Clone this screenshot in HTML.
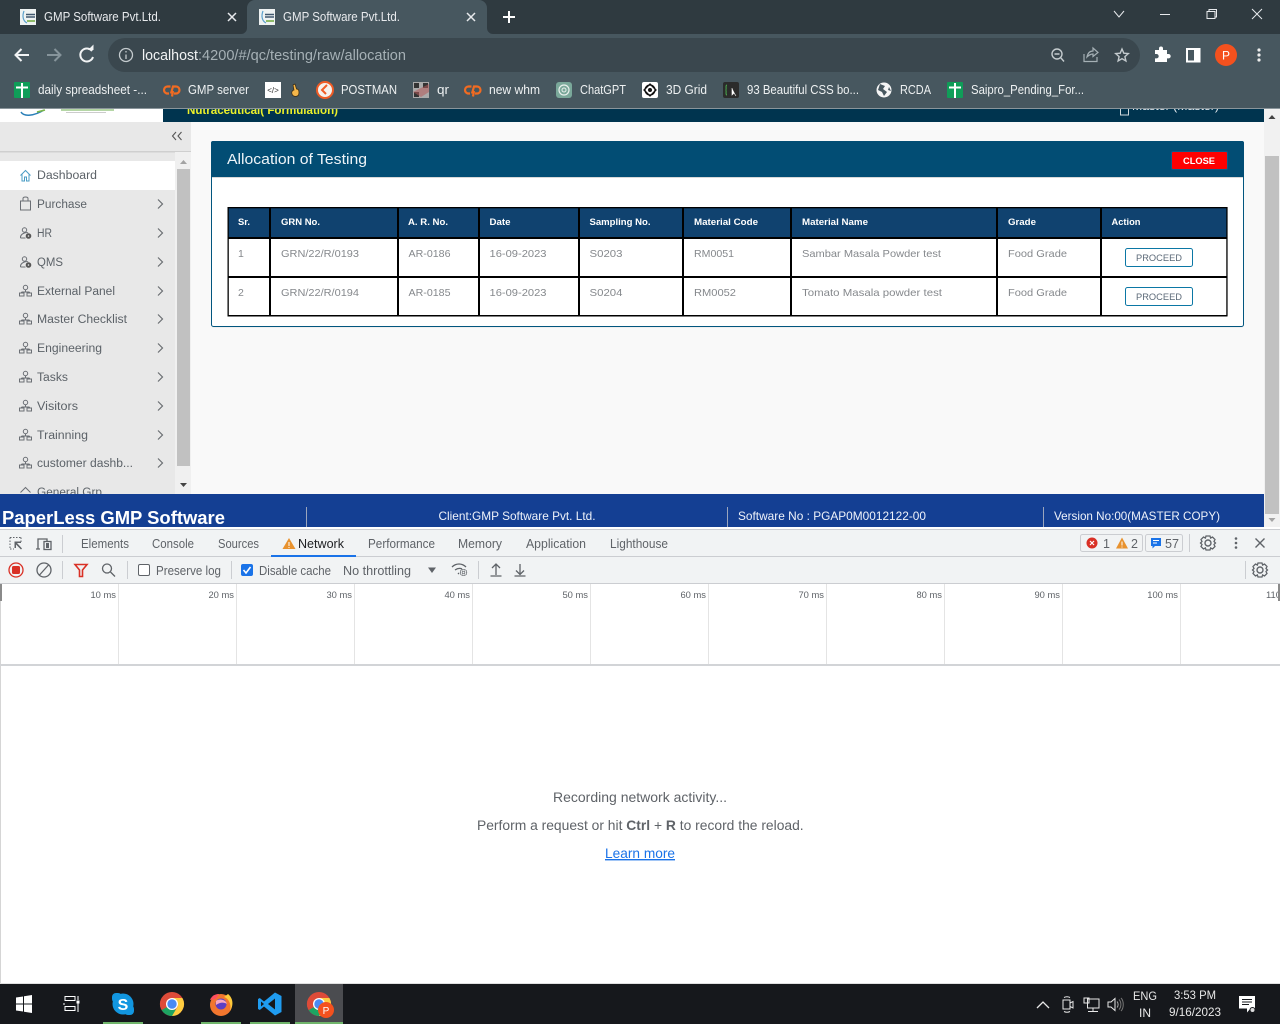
<!DOCTYPE html>
<html lang="en"><head><meta charset="utf-8"><title>GMP Software Pvt.Ltd.</title>
<style>
html,body{margin:0;padding:0;width:1280px;height:1024px;overflow:hidden;background:#fff}
svg{display:block}
text{font-family:"Liberation Sans",sans-serif;white-space:pre}
.chrome{font-size:13px;fill:#e8eaed}
.bm{font-size:12.5px;fill:#eef1f2}
.nav{font-size:11.5px;fill:#5c6268}
.th{font-size:9.5px;font-weight:700;fill:#fff}
.td{font-size:10.5px;fill:#85888c}
.foot{font-size:12px;fill:#eef2fa}
.dt{font-size:12.5px;fill:#5f6368}
.ms{font-size:9.4px;fill:#5f6368;text-anchor:end}
.mid{font-size:13.85px;fill:#5f6368}
.tray{font-size:12px;fill:#e8e8e8}
.st{fill:none;stroke:#6b6f75;stroke-width:1}
.ic{fill:none;stroke:#5f6368;stroke-width:1.3}
</style></head><body>
<svg width="1280" height="1024" viewBox="0 0 1280 1024" xmlns="http://www.w3.org/2000/svg">
<defs>
<g id="org"><circle cx="0" cy="-3.5" r="2.2" class="st"/><path d="M0-1.5V1M-4 1H4M-4 1V2M4 1V2" class="st"/><rect x="-6" y="2" width="4.5" height="3" class="st"/><rect x="1.5" y="2" width="4.5" height="3" class="st"/></g>
<g id="usr"><circle cx="-1" cy="-3" r="2.2" class="st"/><path d="M-5 5C-5.5 0 2-1 2.500 0" class="st"/><path d="M-5 5H0" class="st"/><circle cx="3" cy="3" r="2.300" fill="#555" stroke="#555"/><circle cx="3" cy="3" r=".8" fill="#e8e8e8"/></g>
<path id="chev" d="M-2-4.500L2.500 0L-2 4.500" fill="none" stroke="#6a6e72" stroke-width="1.200"/>
<g id="cp" fill="none" stroke="#f26b21" stroke-width="2.200"><path d="M-1.500-3.500H-4.500A3.500 3.500 0 0 0-4.500 3.500H-3"/><path d="M-1 3.500L1-3.500H4A3.500 3.500 0 0 1 4 3.500H2M1 1L0 6.500"/></g>
<g id="sheet"><rect x="-8" y="-8" width="16" height="16" rx="1" fill="#0f9d58"/><path d="M-6-2.500H6M0-7V8" stroke="#fff" stroke-width="2"/></g>
<g id="fav"><rect x="-8" y="-8" width="16" height="16" fill="#eef2f2"/><path d="M-4-6C-6-1-5 4-1 6" fill="none" stroke="#5aa0cc" stroke-width="1.200"/><path d="M-2-2.500H7M-2 0H7" stroke="#41586f" stroke-width="1.500"/><rect x="-1" y="3" width="8" height="2" fill="#8fbb6a"/></g>
<g id="chromeic"><circle r="12" fill="#dd4b39"/><path d="M0 0L-10.400 6A12 12 0 0 0 6 10.400Z" fill="#1da462"/><path d="M0-6H10.400A12 12 0 0 1 0 12L6 2Z" fill="#ffcd40"/><path d="M0 0L-10.400-6A12 12 0 0 0-10.400 6L-5 3Z" fill="#dd4b39"/><circle r="6" fill="#fff"/><circle r="4.700" fill="#4a8af4"/></g>
<g id="gear"><circle r="3" fill="none" stroke="#5f6368" stroke-width="1.400"/><path d="M-2-7H2L2.600-5 4.500-6 7-3.500 6-1.500 7.500 0 6 1.500 7 3.500 4.500 6 2.600 5 2 7H-2L-2.600 5-4.500 6-7 3.500-6 1.500-7.500 0-6-1.500-7-3.500-4.500-6-2.600-5Z" fill="none" stroke="#5f6368" stroke-width="1.300"/></g>
</defs>

<!-- page -->
<rect x="0" y="109" width="1264" height="385" fill="#f9f9f9"/>
<rect x="0" y="109" width="163" height="13" fill="#fff"/>
<path d="M21 112C24 117 34 116 44 110" fill="none" stroke="#2a7fb8" stroke-width="1.500"/><path d="M37 112L45 110" stroke="#7ab648" stroke-width="1.500"/>
<rect x="61" y="109" width="53" height="2" fill="#b5d6a6"/><rect x="66" y="112" width="40" height="1" fill="#ccc"/>
<rect x="163" y="109" width="1101" height="13" fill="#00344f"/>
<text x="187" y="114" font-size="11.500" font-weight="700" fill="#ecf02a" textLength="151" lengthAdjust="spacingAndGlyphs">Nutraceutical( Formulation)</text>
<text x="1132" y="110" font-size="11" fill="#e8eef2" textLength="87" lengthAdjust="spacingAndGlyphs">Master (Master)</text>
<rect x="1120.500" y="108" width="8" height="7" fill="none" stroke="#cfd8dc"/>

<!-- sidebar -->
<rect x="0" y="122" width="191" height="372" fill="#e8e8e8"/>
<rect x="0" y="151" width="191" height="1.500" fill="#cfcfcf"/>
<path d="M176 132L172.500 136L176 140M181.500 132L178 136L181.500 140" fill="none" stroke="#555" stroke-width="1.100"/>
<rect x="175" y="152" width="16" height="342" fill="#f0f0f0"/>
<rect x="177" y="169" width="13" height="297" fill="#c1c1c1"/>
<path d="M180 164L183.500 160L187 164Z" fill="#a3a3a3"/><path d="M180 483L183.500 487L187 483Z" fill="#444"/>
<rect x="0" y="161" width="175" height="29" fill="#fff"/>
<path d="M20.500 175.500L25.500 170.500L30.500 175.500M22 174.500V181H24.500V177H26.500V181H29V174.500" fill="none" stroke="#4a9cc4" stroke-width="1"/>
<text class="nav" x="37" y="179" textLength="60" lengthAdjust="spacingAndGlyphs">Dashboard</text>
<path d="M20.500 201H30.500V210H20.500ZM23 201V198.500C23 196.500 28 196.500 28 198.500V201" class="st"/>
<text class="nav" x="37" y="208" textLength="50" lengthAdjust="spacingAndGlyphs">Purchase</text><use href="#chev" x="160" y="204"/>
<use href="#usr" x="25.500" y="233"/><text class="nav" x="37" y="237" textLength="15" lengthAdjust="spacingAndGlyphs">HR</text><use href="#chev" x="160" y="233"/>
<use href="#usr" x="25.500" y="262"/><text class="nav" x="37" y="266" textLength="26" lengthAdjust="spacingAndGlyphs">QMS</text><use href="#chev" x="160" y="262"/>
<use href="#org" x="25.500" y="291"/><text class="nav" x="37" y="295" textLength="78" lengthAdjust="spacingAndGlyphs">External Panel</text><use href="#chev" x="160" y="291"/>
<use href="#org" x="25.500" y="319"/><text class="nav" x="37" y="323" textLength="90" lengthAdjust="spacingAndGlyphs">Master Checklist</text><use href="#chev" x="160" y="319"/>
<use href="#org" x="25.500" y="348"/><text class="nav" x="37" y="352" textLength="65" lengthAdjust="spacingAndGlyphs">Engineering</text><use href="#chev" x="160" y="348"/>
<use href="#org" x="25.500" y="377"/><text class="nav" x="37" y="381" textLength="31" lengthAdjust="spacingAndGlyphs">Tasks</text><use href="#chev" x="160" y="377"/>
<use href="#org" x="25.500" y="406"/><text class="nav" x="37" y="410" textLength="41" lengthAdjust="spacingAndGlyphs">Visitors</text><use href="#chev" x="160" y="406"/>
<use href="#org" x="25.500" y="435"/><text class="nav" x="37" y="439" textLength="51" lengthAdjust="spacingAndGlyphs">Trainning</text><use href="#chev" x="160" y="435"/>
<use href="#org" x="25.500" y="463"/><text class="nav" x="37" y="467" textLength="96" lengthAdjust="spacingAndGlyphs">customer dashb...</text><use href="#chev" x="160" y="463"/>
<path d="M20.500 492.500L25.500 487.500L30.500 492.500" class="st"/><text class="nav" x="37" y="496" textLength="65" lengthAdjust="spacingAndGlyphs">General Grp</text>

<!-- card -->
<rect x="211.500" y="143.500" width="1032" height="184" rx="2" fill="#000" opacity=".08"/>
<rect x="211.500" y="141.500" width="1032" height="185" rx="2" fill="#fff" stroke="#02567f"/>
<path d="M211 143a2 2 0 0 1 2-2H1242a2 2 0 0 1 2 2V177H211Z" fill="#024d74"/>
<rect x="212" y="177" width="1031" height="1" fill="#d8d8d8"/>
<text x="227" y="164" font-size="15" fill="#eef4f8" textLength="140" lengthAdjust="spacingAndGlyphs">Allocation of Testing</text>
<rect x="1171.500" y="151.500" width="56" height="18" rx="1.500" fill="#fe0000" stroke="#0d5a86"/>
<text x="1183" y="164" font-size="9.500" font-weight="700" fill="#fff" textLength="32" lengthAdjust="spacingAndGlyphs">CLOSE</text>

<!-- table -->
<rect x="228" y="208" width="999" height="30" fill="#10426f"/>
<g fill="#000">
<rect x="227.500" y="207" width="1000" height="1.300"/><rect x="227.500" y="237" width="1000" height="2"/><rect x="227.500" y="276" width="1000" height="2"/><rect x="227.500" y="315" width="1000" height="1.500"/>
<rect x="227.500" y="207" width="1.300" height="109"/><rect x="269" y="207" width="2" height="109"/><rect x="397" y="207" width="2" height="109"/><rect x="478" y="207" width="2" height="109"/><rect x="578" y="207" width="2" height="109"/><rect x="682" y="207" width="2" height="109"/><rect x="790" y="207" width="2" height="109"/><rect x="996" y="207" width="2" height="109"/><rect x="1100" y="207" width="2" height="109"/><rect x="1226.300" y="207" width="1.300" height="109"/>
</g>
<text class="th" x="238" y="225" textLength="12" lengthAdjust="spacingAndGlyphs">Sr.</text>
<text class="th" x="281" y="225" textLength="39" lengthAdjust="spacingAndGlyphs">GRN No.</text>
<text class="th" x="408" y="225" textLength="40" lengthAdjust="spacingAndGlyphs">A. R. No.</text>
<text class="th" x="489.500" y="225" textLength="21" lengthAdjust="spacingAndGlyphs">Date</text>
<text class="th" x="589.500" y="225" textLength="61" lengthAdjust="spacingAndGlyphs">Sampling No.</text>
<text class="th" x="694" y="225" textLength="64" lengthAdjust="spacingAndGlyphs">Material Code</text>
<text class="th" x="802" y="225" textLength="66" lengthAdjust="spacingAndGlyphs">Material Name</text>
<text class="th" x="1008" y="225" textLength="28" lengthAdjust="spacingAndGlyphs">Grade</text>
<text class="th" x="1111.500" y="225" textLength="29" lengthAdjust="spacingAndGlyphs">Action</text>

<text class="td" x="238" y="257">1</text>
<text class="td" x="281" y="257" textLength="78" lengthAdjust="spacingAndGlyphs">GRN/22/R/0193</text>
<text class="td" x="408.500" y="257" textLength="42" lengthAdjust="spacingAndGlyphs">AR-0186</text>
<text class="td" x="489.500" y="257" textLength="57" lengthAdjust="spacingAndGlyphs">16-09-2023</text>
<text class="td" x="589.500" y="257" textLength="33" lengthAdjust="spacingAndGlyphs">S0203</text>
<text class="td" x="694" y="257" textLength="40" lengthAdjust="spacingAndGlyphs">RM0051</text>
<text class="td" x="802" y="257" textLength="139" lengthAdjust="spacingAndGlyphs">Sambar Masala Powder test</text>
<text class="td" x="1008" y="257" textLength="59" lengthAdjust="spacingAndGlyphs">Food Grade</text>
<rect x="1125.500" y="248.500" width="67" height="18" rx="2" fill="#fff" stroke="#0b77a5"/>
<text x="1136" y="261" font-size="9" fill="#5c6a78" textLength="46" lengthAdjust="spacingAndGlyphs">PROCEED</text>

<text class="td" x="238" y="296">2</text>
<text class="td" x="281" y="296" textLength="78" lengthAdjust="spacingAndGlyphs">GRN/22/R/0194</text>
<text class="td" x="408.500" y="296" textLength="42" lengthAdjust="spacingAndGlyphs">AR-0185</text>
<text class="td" x="489.500" y="296" textLength="57" lengthAdjust="spacingAndGlyphs">16-09-2023</text>
<text class="td" x="589.500" y="296" textLength="33" lengthAdjust="spacingAndGlyphs">S0204</text>
<text class="td" x="694" y="296" textLength="42" lengthAdjust="spacingAndGlyphs">RM0052</text>
<text class="td" x="802" y="296" textLength="140" lengthAdjust="spacingAndGlyphs">Tomato Masala powder test</text>
<text class="td" x="1008" y="296" textLength="59" lengthAdjust="spacingAndGlyphs">Food Grade</text>
<rect x="1125.500" y="287.500" width="67" height="18" rx="2" fill="#fff" stroke="#0b77a5"/>
<text x="1136" y="300" font-size="9" fill="#5c6a78" textLength="46" lengthAdjust="spacingAndGlyphs">PROCEED</text>

<!-- footer -->
<rect x="0" y="494" width="1264" height="33" fill="#143f93"/>
<text x="2" y="524" font-size="18.500" font-weight="700" fill="#fff" textLength="223" lengthAdjust="spacingAndGlyphs">PaperLess GMP Software</text>
<rect x="306" y="507" width="1" height="20" fill="#9aa5bd"/><rect x="727" y="507" width="1" height="20" fill="#9aa5bd"/><rect x="1043" y="507" width="1" height="20" fill="#9aa5bd"/>
<text class="foot" x="438.500" y="520" textLength="157" lengthAdjust="spacingAndGlyphs">Client:GMP Software Pvt. Ltd.</text>
<text class="foot" x="738" y="520" textLength="188" lengthAdjust="spacingAndGlyphs">Software No : PGAP0M0012122-00</text>
<text class="foot" x="1054" y="520" textLength="166" lengthAdjust="spacingAndGlyphs">Version No:00(MASTER COPY)</text>

<!-- page scrollbar -->
<rect x="1264" y="109" width="16" height="418" fill="#f1f1f1"/>
<rect x="1265" y="156" width="14" height="358" fill="#c1c1c1"/>
<path d="M1268.500 119L1272 115L1275.500 119Z" fill="#444"/><path d="M1268.500 518L1272 522L1275.500 518Z" fill="#a3a3a3"/>

<!-- browser chrome -->
<rect x="0" y="0" width="1280" height="34" fill="#2f3a40"/>
<rect x="0" y="34" width="1280" height="74" fill="#47575f"/>
<rect x="0" y="108" width="1280" height="1" fill="#8a959b"/>
<path d="M241 34a6 6 0 0 0 6-6V8a8 8 0 0 1 8-8H479a8 8 0 0 1 8 8V28a6 6 0 0 0 6 6Z" fill="#47575f"/>
<use href="#fav" x="28" y="17"/><use href="#fav" x="267" y="17"/>
<text class="chrome" x="44" y="21" textLength="117" lengthAdjust="spacingAndGlyphs">GMP Software Pvt.Ltd.</text>
<text class="chrome" x="283" y="21" textLength="117" lengthAdjust="spacingAndGlyphs">GMP Software Pvt.Ltd.</text>
<path d="M228 13L236 21M236 13L228 21M467 13L475 21M475 13L467 21" stroke="#e8eaed" stroke-width="1.500"/>
<path d="M509 11V23M503 17H515" stroke="#fff" stroke-width="2"/>
<path d="M1114 11L1119 17L1124 11" fill="none" stroke="#e8eaed"/>
<path d="M1160 14.500H1170" stroke="#e8eaed"/>
<path d="M1207 11.500H1215V18.500H1207ZM1209 11V9.500H1216.500V17H1215" fill="none" stroke="#e8eaed"/>
<path d="M1252 9L1262 19M1262 9L1252 19" stroke="#e8eaed" stroke-width="1"/>

<path d="M16 55H29M21.500 49L15.500 55L21.500 61" fill="none" stroke="#f1f3f4" stroke-width="2"/>
<path d="M47 55H60M54.500 49L60.500 55L54.500 61" fill="none" stroke="#86949b" stroke-width="2"/>
<path d="M92 51A6.500 6.500 0 1 0 93 57" fill="none" stroke="#f1f3f4" stroke-width="2"/><path d="M88 50H93.500V44.500Z" fill="#f1f3f4"/>
<rect x="108" y="38" width="1032" height="34" rx="17" fill="#3a474e"/>
<circle cx="126" cy="55" r="6.500" fill="none" stroke="#c4cbce" stroke-width="1.300"/><path d="M126 54.500V59M126 51V52.500" stroke="#c4cbce" stroke-width="1.300"/>
<text x="142" y="60" font-size="14.500" fill="#f1f3f4" textLength="56" lengthAdjust="spacingAndGlyphs">localhost</text>
<text x="198" y="60" font-size="14.500" fill="#a5b0b5" textLength="208" lengthAdjust="spacingAndGlyphs">:4200/#/qc/testing/raw/allocation</text>
<circle cx="1057" cy="54" r="5" fill="none" stroke="#c4cbce" stroke-width="1.400"/><path d="M1054.500 54H1059.500M1061 58L1064 61.500" stroke="#c4cbce" stroke-width="1.400"/>
<path d="M1084 54V61.500H1097V57M1087 57C1088 52 1091 51 1093 51V48L1098 52.500L1093 56.500V54C1091 54 1089 55 1087 57Z" fill="none" stroke="#a5b0b5" stroke-width="1.200"/>
<path d="M1122 49L1123.800 53.200L1128.300 53.600L1124.900 56.600L1125.900 61L1122 58.700L1118.100 61L1119.100 56.600L1115.700 53.600L1120.200 53.200Z" fill="none" stroke="#c4cbce" stroke-width="1.400"/>
<path d="M1155 50H1159V48.500A2 2 0 0 1 1163 48.500V50H1167V54H1168.500A2.200 2.200 0 0 1 1168.500 58.400H1167V62H1155V58.400H1156.500A2.200 2.200 0 0 0 1156.500 54H1155Z" fill="#fff"/>
<rect x="1187" y="49" width="12.500" height="12.500" fill="none" stroke="#fff" stroke-width="2"/><rect x="1194" y="49" width="6" height="13" fill="#fff"/>
<circle cx="1226" cy="55" r="11" fill="#f4511e"/><text x="1226" y="59.500" font-size="12" fill="#fff" text-anchor="middle">P</text>
<circle cx="1259" cy="50" r="1.600" fill="#eee"/><circle cx="1259" cy="55" r="1.600" fill="#eee"/><circle cx="1259" cy="60" r="1.600" fill="#eee"/>

<!-- bookmarks -->
<use href="#sheet" x="22" y="90"/><text class="bm" x="38" y="94" textLength="109" lengthAdjust="spacingAndGlyphs">daily spreadsheet -...</text>
<use href="#cp" x="172" y="90"/><text class="bm" x="188" y="94" textLength="61" lengthAdjust="spacingAndGlyphs">GMP server</text>
<rect x="265" y="82" width="16" height="16" fill="#fff"/><text x="273" y="93" font-size="8" fill="#333" text-anchor="middle">&lt;/&gt;</text>
<path d="M293 85L295 84L296.500 89C299 89 299.500 92 298.500 95C297 97 293 97 292 94C291 91 293.500 90 294 90Z" fill="#f5b74a" stroke="#3a2a10" stroke-width=".7"/>
<circle cx="325" cy="90" r="8" fill="#f5f0ec" stroke="#ef5b25" stroke-width="2"/><path d="M327 85L322 90L326 94" fill="none" stroke="#ef5b25" stroke-width="2"/><text class="bm" x="341" y="94" textLength="56" lengthAdjust="spacingAndGlyphs">POSTMAN</text>
<rect x="413" y="82" width="16" height="16" fill="#aaa"/><rect x="414" y="83" width="5" height="5" fill="#333"/><rect x="423" y="83" width="5" height="5" fill="#333"/><rect x="414" y="92" width="5" height="5" fill="#333"/><path d="M413 92L429 84V92L421 97Z" fill="#b35a5a" opacity=".55"/>
<text class="bm" x="437" y="94" textLength="12" lengthAdjust="spacingAndGlyphs">qr</text>
<use href="#cp" x="473" y="90"/><text class="bm" x="489" y="94" textLength="51" lengthAdjust="spacingAndGlyphs">new whm</text>
<rect x="556" y="82" width="16" height="16" rx="3" fill="#7aa89a"/><circle cx="564" cy="90" r="5" fill="none" stroke="#e8f0ec" stroke-width="1.200"/><circle cx="564" cy="90" r="2" fill="none" stroke="#e8f0ec"/>
<text class="bm" x="580" y="94" textLength="46" lengthAdjust="spacingAndGlyphs">ChatGPT</text>
<rect x="642" y="82" width="16" height="16" rx="2" fill="#fff"/><path d="M650 84L656 90L650 96L644 90Z" fill="none" stroke="#111" stroke-width="1.300"/><circle cx="650" cy="90" r="5" fill="none" stroke="#111" stroke-width="1.200"/><circle cx="650" cy="90" r="2" fill="#111"/>
<text class="bm" x="666" y="94" textLength="41" lengthAdjust="spacingAndGlyphs">3D Grid</text>
<rect x="723" y="82" width="16" height="16" rx="2" fill="#2b2b2b"/><path d="M727 85C725 85 727 90 725.500 90C727 90 725 95 727 95" fill="none" stroke="#4caf50"/><path d="M732 88V95L734 93L736 96" fill="#fff" stroke="#fff" stroke-width=".6"/>
<text class="bm" x="747" y="94" textLength="112" lengthAdjust="spacingAndGlyphs">93 Beautiful CSS bo...</text>
<circle cx="884" cy="90" r="7.500" fill="#f5f5f5"/><path d="M880 84L885 86L883 89L887 92L884 96L882 92L878 90ZM889 87L891 91L888 90Z" fill="#47575f"/>
<text class="bm" x="900" y="94" textLength="31" lengthAdjust="spacingAndGlyphs">RCDA</text>
<use href="#sheet" x="955" y="90"/><text class="bm" x="971" y="94" textLength="113" lengthAdjust="spacingAndGlyphs">Saipro_Pending_For...</text>

<!-- devtools -->
<rect x="0" y="527" width="1280" height="2" fill="#fff"/>
<rect x="0" y="529" width="1280" height="1" fill="#cbcdd1"/>
<rect x="0" y="530" width="1280" height="53" fill="#f1f3f4"/>
<rect x="0" y="556" width="1280" height="1" fill="#cbcdd1"/>
<rect x="0" y="583" width="1280" height="1.500" fill="#cbcdd1"/>
<rect x="0" y="584" width="1280" height="400" fill="#fff"/>
<rect x="0" y="584" width="1" height="400" fill="#d5d5d5"/>

<path d="M10 537.500H21M10 537.500V549M10 549H14M21 537.500V542" fill="none" stroke="#5f6368" stroke-dasharray="1.500 1.500"/><path d="M14.500 541.500H21V543H17L22 548.500L21 549.500L16 544.500V548H14.500Z" fill="#5f6368"/>
<path d="M36 549H40M38 549V539H47V541" class="ic" fill="none"/><rect x="44" y="541.500" width="7" height="8" class="ic"/><rect x="46" y="543" width="3" height="5" fill="#5f6368"/>
<rect x="62" y="535" width="1" height="18" fill="#cbcdd1"/>
<text class="dt" x="81" y="548" textLength="48" lengthAdjust="spacingAndGlyphs">Elements</text>
<text class="dt" x="152" y="548" textLength="42" lengthAdjust="spacingAndGlyphs">Console</text>
<text class="dt" x="218" y="548" textLength="41" lengthAdjust="spacingAndGlyphs">Sources</text>
<path d="M289 538L295.500 549H282.500Z" fill="#e8922e"/><path d="M289 542V546M289 547V548" stroke="#fff"/>
<text x="298" y="548" font-size="12.500" fill="#202124" textLength="46" lengthAdjust="spacingAndGlyphs">Network</text>
<rect x="271" y="555" width="85" height="2" fill="#1a73e8"/>
<text class="dt" x="368" y="548" textLength="67" lengthAdjust="spacingAndGlyphs">Performance</text>
<text class="dt" x="458" y="548" textLength="44" lengthAdjust="spacingAndGlyphs">Memory</text>
<text class="dt" x="526" y="548" textLength="60" lengthAdjust="spacingAndGlyphs">Application</text>
<text class="dt" x="610" y="548" textLength="58" lengthAdjust="spacingAndGlyphs">Lighthouse</text>

<rect x="1080.500" y="534.500" width="62" height="17" rx="2" fill="#f1f3f4" stroke="#cbcdd1"/>
<circle cx="1092" cy="543" r="5.500" fill="#d93025"/><path d="M1090 541L1094 545M1094 541L1090 545" stroke="#fff" stroke-width="1.200"/>
<text class="dt" x="1103" y="548">1</text>
<path d="M1122 537.500L1128 548.500H1116Z" fill="#e8922e"/><path d="M1122 541.500V545.500M1122 546.500V547.500" stroke="#fff"/>
<text class="dt" x="1131" y="548">2</text>
<rect x="1145.500" y="534.500" width="37" height="17" rx="2" fill="#f1f3f4" stroke="#cbcdd1"/>
<path d="M1151 538H1161V546H1155L1152.500 548.500V546H1151Z" fill="#1a73e8"/><path d="M1153 540.500H1159M1153 543H1157" stroke="#fff"/>
<text class="dt" x="1165" y="548" textLength="14" lengthAdjust="spacingAndGlyphs">57</text>
<rect x="1189" y="534" width="1" height="18" fill="#cbcdd1"/>
<use href="#gear" x="1208" y="543"/>
<circle cx="1236" cy="538.500" r="1.300" fill="#5f6368"/><circle cx="1236" cy="543" r="1.300" fill="#5f6368"/><circle cx="1236" cy="547.500" r="1.300" fill="#5f6368"/>
<path d="M1255.500 538.500L1264.500 547.500M1264.500 538.500L1255.500 547.500" stroke="#5f6368" stroke-width="1.400"/>

<circle cx="16" cy="570" r="7" fill="none" stroke="#d93025" stroke-width="1.300"/><rect x="12" y="566" width="8" height="8" rx="1.500" fill="#d93025"/>
<circle cx="44" cy="570" r="7" class="ic"/><path d="M39.500 575L48.500 565" class="ic"/>
<rect x="62" y="561" width="1" height="18" fill="#cbcdd1"/>
<path d="M75 564.500H87L82.500 570V576.500H79.500V570Z" fill="none" stroke="#d93025" stroke-width="1.600"/>
<circle cx="107" cy="568.500" r="4.500" class="ic" stroke-width="1.500"/><path d="M110.500 572L115 576.500" class="ic" stroke-width="1.800"/>
<rect x="127" y="561" width="1" height="18" fill="#cbcdd1"/>
<rect x="138.500" y="564.500" width="11" height="11" rx="1.500" fill="#fff" stroke="#5f6368"/>
<text class="dt" x="156" y="575" textLength="65" lengthAdjust="spacingAndGlyphs">Preserve log</text>
<rect x="231" y="561" width="1" height="18" fill="#cbcdd1"/>
<rect x="241" y="564" width="12" height="12" rx="2" fill="#1a73e8"/><path d="M243.500 570L246 573L250.500 567" fill="none" stroke="#fff" stroke-width="1.600"/>
<text class="dt" x="259" y="575" textLength="72" lengthAdjust="spacingAndGlyphs">Disable cache</text>
<text class="dt" x="343" y="575" textLength="68" lengthAdjust="spacingAndGlyphs">No throttling</text>
<path d="M428 567.500H436L432 573Z" fill="#5f6368"/>
<path d="M452 567C456 563 462 563 466 567M455 570C458 568 460 568 462 569M458 573L459 574" class="ic"/>
<use href="#gear" transform="translate(463.500 572.500) scale(.45)"/>
<rect x="478" y="561" width="1" height="18" fill="#cbcdd1"/>
<path d="M496 575V564M492 568L496 564L500 568M490.500 576H501.500" class="ic"/>
<path d="M520 564V574M516 570.500L520 574.500L524 570.500M514.500 576H525.500" class="ic"/>
<rect x="1245" y="561" width="1" height="18" fill="#cbcdd1"/>
<use href="#gear" x="1260" y="570"/>

<rect x="0" y="584" width="2" height="17" fill="#8a8a8a"/>
<g fill="#e4e4e4"><rect x="118" y="584" width="1" height="81"/><rect x="236" y="584" width="1" height="81"/><rect x="354" y="584" width="1" height="81"/><rect x="472" y="584" width="1" height="81"/><rect x="590" y="584" width="1" height="81"/><rect x="708" y="584" width="1" height="81"/><rect x="826" y="584" width="1" height="81"/><rect x="944" y="584" width="1" height="81"/><rect x="1062" y="584" width="1" height="81"/><rect x="1180" y="584" width="1" height="81"/></g>
<text class="ms" x="116" y="598">10 ms</text><text class="ms" x="234" y="598">20 ms</text><text class="ms" x="352" y="598">30 ms</text><text class="ms" x="470" y="598">40 ms</text><text class="ms" x="588" y="598">50 ms</text><text class="ms" x="706" y="598">60 ms</text><text class="ms" x="824" y="598">70 ms</text><text class="ms" x="942" y="598">80 ms</text><text class="ms" x="1060" y="598">90 ms</text><text class="ms" x="1178" y="598">100 ms</text>
<text x="1266" y="598" font-size="9.400" fill="#5f6368">110 ms</text>
<rect x="1278" y="584" width="2" height="17" fill="#8a8a8a"/>
<rect x="0" y="664" width="1280" height="2" fill="#d2d4d7"/>

<text class="mid" x="553" y="802" textLength="174" lengthAdjust="spacingAndGlyphs">Recording network activity...</text>
<text class="mid" x="477" y="830">Perform a request or hit <tspan font-weight="700">Ctrl</tspan> + <tspan font-weight="700">R</tspan> to record the reload.</text>
<text x="605" y="858" font-size="14" fill="#1a73e8" text-decoration="underline" textLength="70" lengthAdjust="spacingAndGlyphs">Learn more</text>

<!-- taskbar -->
<rect x="0" y="983" width="1280" height="1" fill="#e0e0e0"/>
<rect x="0" y="984" width="1280" height="40" fill="#16181c"/>
<path d="M16 997.500L23 996.500V1003.500H16ZM24 996.300L32 995V1003.500H24ZM16 1004.500H23V1011.500L16 1010.500ZM24 1004.500H32V1013L24 1011.700Z" fill="#fff"/>
<path d="M65 997H75V1001H65ZM65 1007H75V1011H65Z" fill="none" stroke="#fff" transform="translate(0 -.5)"/><path d="M64 1003V1005M78 996V1000M78 1003V1012" stroke="#fff"/><rect x="76.500" y="1000.500" width="3" height="3" fill="#fff"/>
<rect x="103" y="1022" width="40" height="2" fill="#70b56b"/><rect x="201" y="1022" width="40" height="2" fill="#70b56b"/><rect x="250" y="1022" width="40" height="2" fill="#70b56b"/>
<rect x="295" y="984" width="48" height="40" fill="#4b4c50"/><rect x="295" y="1022" width="48" height="2" fill="#70b56b"/>
<circle cx="123" cy="1004" r="10.500" fill="#1296e0"/><rect x="112" y="993" width="10" height="10" rx="4" fill="#1296e0"/><rect x="124" y="1005" width="10" height="10" rx="4" fill="#1296e0"/>
<text x="123" y="1010" font-size="16" font-weight="700" fill="#fff" text-anchor="middle">S</text>
<use href="#chromeic" x="172" y="1004"/>
<circle cx="221" cy="1005" r="11" fill="#f2762e"/><path d="M228 994C233 998 234 1005 230 1011C232 1004 228 998 224 997Z" fill="#ffca3a"/><path d="M210 1000C212 995 216 994 219 994L216 999Z" fill="#ff4f5e"/><circle cx="221" cy="1004" r="5.500" fill="#5b3fc4"/><path d="M216 1001C220 998 226 1000 227 1004C224 1002 220 1002 216 1005Z" fill="#f7a6c0"/>
<path d="M275 992.500L281.500 996V1012L275 1015.500L264 1006.500L259.800 1010L258 1009V999L259.800 998L264 1001.500Z" fill="#1f9cf0"/><path d="M275 998.500V1009.500L268 1004Z" fill="#16181c"/><path d="M261 1001.500V1006.500L264 1004Z" fill="#16181c"/>
<use href="#chromeic" x="319" y="1004"/>
<circle cx="326" cy="1010" r="8" fill="#f4511e"/><text x="326" y="1014" font-size="10" fill="#fff" text-anchor="middle">P</text>

<path d="M1037 1008L1043 1002L1049 1008" fill="none" stroke="#e8e8e8" stroke-width="1.300"/>
<path d="M1063 1000H1070V1009H1063ZM1070 1003L1073 1001.500V1008L1070 1006.500M1064 997.500C1066 996.500 1068 996.500 1070 997.500M1064 1011.500C1066 1012.500 1068 1012.500 1070 1011.500" fill="none" stroke="#e8e8e8"/>
<path d="M1087.500 999H1099V1008H1087.500ZM1093 1008V1011M1088 1011.500H1098M1084 998H1089V1003H1084Z" fill="#16181c" stroke="#e8e8e8"/>
<path d="M1108 1002H1111L1115 998.500V1010.500L1111 1007H1108Z" fill="none" stroke="#e8e8e8"/><path d="M1117 1001.500C1118.500 1003 1118.500 1006 1117 1007.500" fill="none" stroke="#aaa"/><path d="M1119 999.500C1121.500 1002 1121.500 1007 1119 1009.500M1121 998C1124 1001 1124 1008 1121 1011" fill="none" stroke="#777"/>
<text class="tray" x="1133" y="1000" textLength="24" lengthAdjust="spacingAndGlyphs">ENG</text>
<text class="tray" x="1139" y="1017" textLength="12" lengthAdjust="spacingAndGlyphs">IN</text>
<text class="tray" x="1174" y="999" textLength="42" lengthAdjust="spacingAndGlyphs">3:53 PM</text>
<text class="tray" x="1169" y="1016" textLength="52" lengthAdjust="spacingAndGlyphs">9/16/2023</text>
<path d="M1239 996H1255V1008.500H1250.500L1247 1012.500V1008.500H1239Z" fill="#fff"/><path d="M1242 999.500H1252M1242 1002H1252M1242 1004.500H1249" stroke="#16181c"/><circle cx="1252.500" cy="1010" r="2.500" fill="#ddd" stroke="#16181c"/>
</svg>
</body></html>
